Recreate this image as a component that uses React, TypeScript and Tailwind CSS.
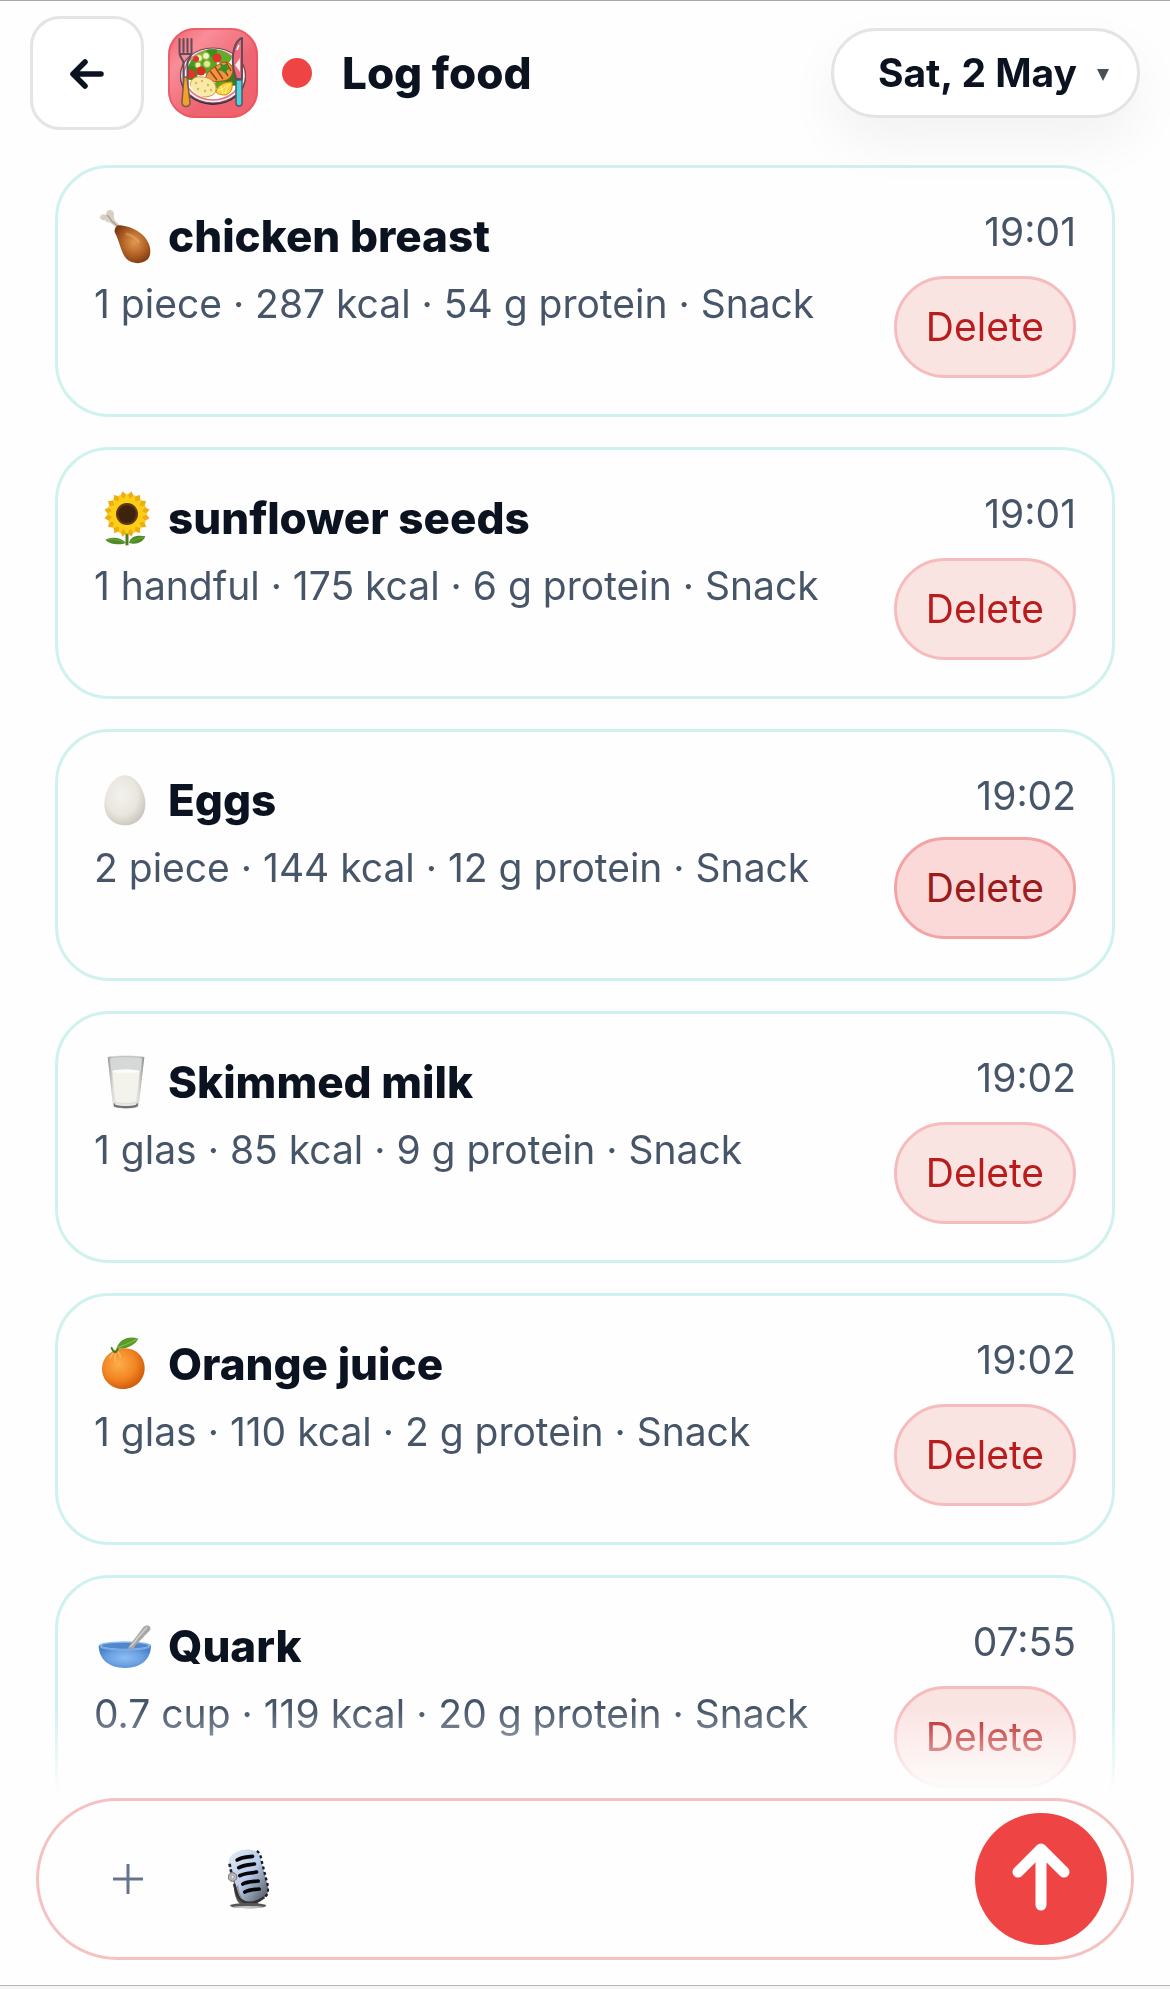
import { useState } from "react";

type Entry = {
  icon: () => React.JSX.Element;
  name: string;
  amount: string;
  kcal: number;
  protein: number;
  meal: string;
  time: string;
  active?: boolean;
}

function MealIcon() {
  return (
    <svg viewBox="0 0 90 90" className="w-[90px] h-[90px] shrink-0" aria-hidden="true">
      <defs>
        <linearGradient id="mealBg" x1="0" y1="0" x2="1" y2="1">
          <stop offset="0" stopColor="#f0616b" />
          <stop offset="0.25" stopColor="#f98d99" />
          <stop offset="0.6" stopColor="#ee6572" />
          <stop offset="1" stopColor="#f0606a" />
        </linearGradient>
        <clipPath id="plateClip"><ellipse cx="45" cy="46" rx="26" ry="25" /></clipPath>
      </defs>
      <rect width="90" height="90" rx="27" fill="url(#mealBg)" />
      <rect x="1" y="1" width="88" height="88" rx="26" fill="none" stroke="#e9505b" strokeWidth="2" opacity="0.7" />
      <ellipse cx="45" cy="49" rx="33" ry="28" fill="#2d2a3c" />
      <ellipse cx="45" cy="47.500" rx="32.500" ry="27.500" fill="#f7e9ec" stroke="#6c4a55" strokeWidth="1.200" />
      <ellipse cx="45" cy="47" rx="29" ry="25" fill="#fff" stroke="#e8737f" strokeWidth="1.500" />
      <g clipPath="url(#plateClip)">
        <circle cx="26" cy="34" r="8" fill="#4a9a22" />
        <circle cx="34" cy="27" r="7" fill="#6fba2c" />
        <circle cx="44" cy="25" r="6" fill="#3f8f1f" />
        <circle cx="56" cy="28" r="8" fill="#5fae28" />
        <circle cx="23" cy="45" r="7" fill="#3e8a1d" />
        <circle cx="40" cy="37" r="9" fill="#58a526" />
        <circle cx="54" cy="56" r="7" fill="#58a526" />
        <circle cx="64" cy="50" r="8" fill="#357f1a" />
        <circle cx="31" cy="30" r="3.500" fill="#e9f3b0" stroke="#8dbb3c" />
        <circle cx="38" cy="28" r="3.500" fill="#f1f6c4" stroke="#8dbb3c" />
        <circle cx="30" cy="37" r="3" fill="#e9f3b0" stroke="#8dbb3c" />
        <circle cx="39" cy="36" r="3.500" fill="#dfeb9a" stroke="#8dbb3c" />
        <circle cx="49" cy="30" r="4.500" fill="#e3342a" />
        <circle cx="33" cy="43" r="4.500" fill="#dc2c22" />
        <circle cx="23" cy="46" r="4.500" fill="#e3342a" />
        <circle cx="28" cy="31" r="3" fill="#e3342a" />
        <path d="M38 48c2-6 9-9 15-13 6-3 12 1 12 8-1 6-5 10-11 10-6 1-16 1-16-5z" fill="#ef9440" stroke="#a94f13" strokeWidth="1" />
        <path d="m42 43 7 9M47 39l8 12M53 36l7 12M58 34l5 9" stroke="#9c4513" strokeWidth="1.500" />
        <path d="m54 43-5-1 4-3-1-3 4 1 3-2v4l4 1-4 2-1 4z" fill="#3c8d24" />
        <path d="M22 58c0-7 6-10 11-9 9 0 15 5 15 12 0 6-6 8-13 8-8 0-13-5-13-11z" fill="#f6e9a9" stroke="#c99d3b" strokeWidth="1" />
        <path d="M48 64c1-6 7-10 16-10 1 6-1 12-7 13-4 0-8-1-9-3z" fill="#ffd23a" stroke="#d2870e" />
        <path d="m50 63 12-7M57 66l3-9M53 58l2 8" stroke="#fff2a0" strokeWidth="1" />
      </g>
      <g fill="#e4b53f">
        <circle cx="28" cy="55" r="1.200" /><circle cx="34" cy="53" r="1.200" /><circle cx="40" cy="57" r="1.200" />
        <circle cx="30" cy="61" r="1.200" /><circle cx="37" cy="63" r="1.200" /><circle cx="43" cy="62" r="1.200" />
      </g>
      <path d="M11.500 11v14c0 5 4 6 4 10v22h4V35c0-4 4-5 4-10V11" fill="none" stroke="#5f4d57" strokeWidth="2" strokeLinecap="round" />
      <path d="M15.500 11v13M19.500 11v13M12 26h11" stroke="#5f4d57" strokeWidth="2" strokeLinecap="round" />
      <path d="M16 49h3l3 25c1 6-9 6-8 0z" fill="#f2a22c" stroke="#7c5b43" strokeWidth="1.500" />
      <path d="M74 10c-7 3-10 14-9 27 0 7 3 10 3 14h6z" fill="#f1697a" stroke="#5f4d57" strokeWidth="2" strokeLinejoin="round" />
      <path d="M67 37l5-7v14z" fill="#fbe9ec" />
      <path d="M69 22l2-5" stroke="#fff" strokeWidth="1.500" />
      <path d="M68 52h6v23c0 4-6 4-6 0z" fill="#4fd3de" stroke="#4f5a68" strokeWidth="1.500" />
    </svg>
  );
}

function ChickenIcon() {
  return (
    <svg viewBox="0 0 180 180" className="w-[60px] h-[60px] shrink-0" aria-hidden="true">
      <defs>
        <radialGradient id="legMeat" cx="0.55" cy="0.45" r="0.6">
          <stop offset="0" stopColor="#e09a50" />
          <stop offset="0.5" stopColor="#b9682a" />
          <stop offset="1" stopColor="#7c3811" />
        </radialGradient>
      </defs>
      <path d="M62 66 43 50c-8 0-15-2-14-7-10 2-20-5-16-12 3-7 11-8 18-5-2-7 3-14 11-14 9 0 14 8 12 18-1 6 0 10 4 14l14 15z" fill="#d8cfc5" />
      <path d="M33 28c5 2 9 8 14 17l18 16" fill="none" stroke="#a99d92" strokeWidth="4" />
      <path d="M68 58c26 0 66 15 84 43 13 20 15 44 4 58-15 17-48 16-64 0C74 140 72 108 56 78c-1-9 3-18 12-20z" fill="url(#legMeat)" />
      <path d="M92 84c16 4 28 12 36 24" fill="none" stroke="#efb678" strokeWidth="7" strokeLinecap="round" opacity="0.4" />
    </svg>
  );
}

function SunflowerIcon() {
  return (
    <svg viewBox="0 0 180 180" className="w-[60px] h-[60px] shrink-0" aria-hidden="true">
      <path d="M93 130v42" stroke="#4e7d1d" strokeWidth="9" />
      <path d="M90 164c-14 8-50 6-62-9 18-10 47-8 62 9zM99 165c5-21 28-24 49-20-6 18-28 27-49 20z" fill="#4f8b26" />
      <path d="M34 155c20-3 36 0 52 9M103 163c14-9 24-12 40-15" fill="none" stroke="#7bb04a" strokeWidth="2" />
      {[11, 34, 56, 79, 101, 124, 146, 169, 191, 214, 236, 259, 281, 304, 326, 349].map((angle) => (
        <path key={angle} d="M93 78 74 34 93 10l19 24z" fill="#f0ae0b" stroke="#d99408" strokeWidth="1" transform={`rotate(${angle} 93 78)`} />
      ))}
      {[0, 22, 45, 68, 90, 112, 135, 158, 180, 202, 225, 248, 270, 292, 315, 338].map((angle) => (
        <path key={angle} d="M93 78 80 40 93 16l13 24z" fill="#fdce18" transform={`rotate(${angle} 93 78)`} />
      ))}
      <circle cx="93" cy="78" r="33" fill="#5d3512" />
      <circle cx="93" cy="78" r="26" fill="#3d230e" />
      <circle cx="93" cy="78" r="30" fill="none" stroke="#6b3f13" strokeWidth="3" strokeDasharray="3 4" />
    </svg>
  );
}

function EggIcon() {
  return (
    <svg viewBox="0 0 180 180" className="w-[60px] h-[60px] shrink-0" aria-hidden="true">
      <defs>
        <radialGradient id="eggShell" cx="0.42" cy="0.4" r="0.65">
          <stop offset="0" stopColor="#f4f2ed" />
          <stop offset="0.6" stopColor="#e9e6df" />
          <stop offset="1" stopColor="#c9c5bc" />
        </radialGradient>
      </defs>
      <path d="M86 16c34 0 62 46 62 86 0 38-26 64-61 64-36 0-62-26-62-64 0-40 28-86 61-86z" fill="url(#eggShell)" />
    </svg>
  );
}

function MilkIcon() {
  return (
    <svg viewBox="0 0 180 180" className="w-[60px] h-[60px] shrink-0" aria-hidden="true">
      <defs>
        <linearGradient id="milkGlass" x1="0" x2="1">
          <stop offset="0" stopColor="#8f8f8f" />
          <stop offset="0.15" stopColor="#e2e2e2" />
          <stop offset="0.85" stopColor="#dcdcdc" />
          <stop offset="1" stopColor="#858585" />
        </linearGradient>
      </defs>
      <path d="M35 16c18-7 92-7 110 0l-17 146c-2 11-75 11-77 0z" fill="url(#milkGlass)" />
      <path d="M42 20c22-5 74-5 96 0l-4 38H46z" fill="#d5d7d8" />
      <path d="M49 58c20-5 62-5 82 0l-10 90c-10 6-54 6-63 0z" fill="#f3f2eb" />
      <ellipse cx="90" cy="58" rx="41" ry="6" fill="#fbfbf7" />
      <path d="M53 154c17 7 56 7 73 0l-1 9c-8 8-63 8-71 0z" fill="#717171" />
      <path d="M58 156c18 5 46 5 62 0" fill="none" stroke="#eee" strokeWidth="4" />
      <path d="M37 18c20-5 86-5 106 0" fill="none" stroke="#b8b8b8" strokeWidth="3" />
    </svg>
  );
}

function OrangeIcon() {
  return (
    <svg viewBox="0 0 180 180" className="w-[60px] h-[60px] shrink-0" aria-hidden="true">
      <defs>
        <radialGradient id="orangePeel" cx="0.4" cy="0.38" r="0.65">
          <stop offset="0" stopColor="#fdad4b" />
          <stop offset="0.6" stopColor="#f28522" />
          <stop offset="1" stopColor="#cf5a0a" />
        </radialGradient>
      </defs>
      <path d="M82 43c37-2 64 24 64 59 0 37-29 63-64 63-36 0-64-26-64-61 0-34 29-59 64-61z" fill="url(#orangePeel)" />
      <path d="M56 54c-8 6-12 12-14 20M60 56c-3 8-4 16-3 24M65 53c6 4 8 10 8 16" fill="none" stroke="#ffd28c" strokeWidth="4" strokeLinecap="round" opacity="0.6" />
      <path d="M47 42c3 8 6 12 11 13 5-2 6-8 8-14" fill="none" stroke="#477b1c" strokeWidth="6" strokeLinecap="round" />
      <path d="M62 43c6-24 33-39 65-29-9 19-37 33-65 29z" fill="#5a9a2b" />
      <path d="M65 40c17-5 36-13 57-24" fill="none" stroke="#91c454" strokeWidth="3" />
    </svg>
  );
}

function BowlIcon() {
  return (
    <svg viewBox="0 0 180 180" className="w-[60px] h-[60px] shrink-0" aria-hidden="true">
      <defs>
        <radialGradient id="bowlBody" cx="0.5" cy="0.55" r="0.55">
          <stop offset="0" stopColor="#8dbdf3" />
          <stop offset="0.6" stopColor="#6ba1e2" />
          <stop offset="1" stopColor="#4a80c6" />
        </radialGradient>
      </defs>
      <path d="M8 88c0 43 32 68 79 68s78-25 78-68z" fill="url(#bowlBody)" />
      <ellipse cx="87" cy="88" rx="78" ry="12" fill="#8fbdf0" />
      <ellipse cx="87" cy="89" rx="70" ry="9" fill="#5187cb" />
      <path d="M94 98c7-10 12-15 17-24l31-40c8-11 27-5 20 9l-39 40c-6 5-7 10-10 15z" fill="#a9a5a2" />
      <path d="M103 91c12-8 16-18 23-27l26-29" fill="none" stroke="#cfccc9" strokeWidth="5" strokeLinecap="round" />
      <path d="M14 94c30 11 115 11 146 0" fill="none" stroke="#78ade9" strokeWidth="5" />
    </svg>
  );
}

function MicIcon() {
  return (
    <svg viewBox="0 0 122 180" className="w-[41px] h-[60px]" aria-hidden="true">
      <defs>
        <linearGradient id="micBody" x1="0" y1="0" x2="1" y2="1">
          <stop offset="0" stopColor="#e6ebf3" />
          <stop offset="0.5" stopColor="#b7cbea" />
          <stop offset="1" stopColor="#494b50" />
        </linearGradient>
      </defs>
      <path d="M16 90c2 36 2 58 20 76h54V140z" fill="#5b5656" />
      <path d="M2 36C6 12 36 0 66 2c22 2 30 12 33 32l20 78c6 28-14 42-42 48-24 4-42-6-45-26L12 78C6 64 0 50 2 36z" fill="url(#micBody)" />
      <path d="M86 6c9 6 12 15 14 28l19 76c4 17-1 28-11 36" fill="none" stroke="#1c1c20" strokeWidth="7" strokeDasharray="9 8" />
      <path d="M18 105c6 24 10 48 36 56 20 2 40-4 54-16" fill="none" stroke="#343436" strokeWidth="8" />
      <path d="M28 110c2 20 5 28 12 36" fill="none" stroke="#99918e" strokeWidth="4" />
      <path d="M4 44 12 84" stroke="#25262b" strokeWidth="8" strokeDasharray="10 7" />
      <path d="M27 33c15-9 28-8 46-11M32 56c15-8 31-8 47-11M35 80c15-8 34-7 50-11M44 105c14-8 30-7 46-9M50 129c13-8 26-7 43-9" fill="none" stroke="#050509" strokeWidth="11" strokeLinecap="round" />
      <circle cx="13" cy="84" r="13" fill="#b9babd" stroke="#6c6c70" strokeWidth="3" />
      <circle cx="13" cy="84" r="5" fill="#e9eaec" stroke="#888" strokeWidth="2" />
      <ellipse cx="60" cy="170" rx="54" ry="8" fill="#5c5755" />
      <ellipse cx="60" cy="174" rx="44" ry="3" fill="#c9c9c9" />
    </svg>
  );
}

const entries: Entry[] = [
  { icon: ChickenIcon, name: "chicken breast", amount: "1 piece", kcal: 287, protein: 54, meal: "Snack", time: "19:01" },
  { icon: SunflowerIcon, name: "sunflower seeds", amount: "1 handful", kcal: 175, protein: 6, meal: "Snack", time: "19:01" },
  { icon: EggIcon, name: "Eggs", amount: "2 piece", kcal: 144, protein: 12, meal: "Snack", time: "19:02", active: true },
  { icon: MilkIcon, name: "Skimmed milk", amount: "1 glas", kcal: 85, protein: 9, meal: "Snack", time: "19:02" },
  { icon: OrangeIcon, name: "Orange juice", amount: "1 glas", kcal: 110, protein: 2, meal: "Snack", time: "19:02" },
  { icon: BowlIcon, name: "Quark", amount: "0.7 cup", kcal: 119, protein: 20, meal: "Snack", time: "07:55" },
];

export default function App() {
  const [items, setItems] = useState(entries);

  return (
    <div className="h-screen flex flex-col bg-[#f5f5f5] font-['Inter',sans-serif] text-[#0b1220]">
      <div className="flex-1 min-h-0 flex flex-col bg-[#fefefe] border-t border-b border-t-[#a8a8a8] border-b-[#b8b8b8] mb-[3px]">
        <header className="relative z-10 flex items-center gap-6 px-[30px] pt-[15px]">
          <button aria-label="Back" className="w-[114px] h-[114px] shrink-0 flex items-center justify-center rounded-[30px] border-3 border-[#e4e4e5] bg-white">
            <svg viewBox="0 0 36 34" className="w-9 h-[34px]" fill="none" stroke="#0b1220" strokeWidth="5.500" strokeLinecap="round" strokeLinejoin="round">
              <path d="M32 18H4M16 6 4 18l12 12" />
            </svg>
          </button>
          <MealIcon />
          <span className="w-[30px] h-[30px] shrink-0 rounded-full bg-[#ef4444]" />
          <h1 className="flex-1 ml-1.5 text-[44px] leading-[56px] font-extrabold">Log food</h1>
          <button className="h-[90px] flex items-center gap-5 pl-11 pr-7 rounded-full border-3 border-[#e4e4e5] bg-white shadow-[0_24px_54px_rgba(15,23,42,0.05)]">
            <span className="text-[39px] leading-[48px] font-bold">Sat, 2 May</span>
            <svg viewBox="0 0 12 12" className="w-3 h-3 mt-1" aria-hidden="true"><path d="M0 0h12L6 12z" fill="#475057" /></svg>
          </button>
        </header>

        <main className="flex-1 min-h-0 overflow-hidden mt-[35px] px-[55px] flex flex-col gap-[30px] [mask-image:linear-gradient(to_bottom,black_calc(100%-90px),transparent_calc(100%-4px))]">
          {items.map((item) => (
            <article key={item.name} className="shrink-0 flex justify-between rounded-[54px] border-3 border-[#cff2ee] p-9">
              <div className="flex flex-col gap-2">
                <div className="flex items-center gap-3 h-16 pl-0.5">
                  <item.icon />
                  <h2 className="text-[44px] leading-[56px] font-extrabold">{item.name}</h2>
                </div>
                <p className="text-[39px] leading-[56px] text-[#475569]">
                  {item.amount} · {item.kcal} kcal · {item.protein} g protein · {item.meal}
                </p>
              </div>
              <div className="flex flex-col items-end gap-4">
                <time className="text-[39px] leading-[56px] text-[#475569]">{item.time}</time>
                <button
                  onClick={() => setItems(items.filter((other) => other !== item))}
                  className={`h-[102px] px-[29px] rounded-full border-3 text-[39px] leading-[48px] ${item.active ? "-translate-y-[3px] border-[#f3a3a3] bg-[#fcd9d9] text-[#991b1b]" : "border-[#f6bcbd] bg-[#fae4e2] text-[#b91c1c]"}`}
                >
                  Delete
                </button>
              </div>
            </article>
          ))}
        </main>

        <footer className="px-9 pb-[25px]">
          <form onSubmit={(e) => e.preventDefault()} className="h-[162px] flex items-center rounded-full border-3 border-[#f5c2c3] pl-[74px] pr-6">
            <button type="button" aria-label="Add">
              <svg viewBox="0 0 30 30" className="w-[30px] h-[30px]" stroke="#64748b" strokeWidth="3"><path d="M15 0v30M0 15h30" /></svg>
            </button>
            <button type="button" aria-label="Record" className="ml-[85px]"><MicIcon /></button>
            <input aria-label="Food" className="flex-1 min-w-0 mx-8 text-[39px] bg-transparent outline-none" />
            <button aria-label="Send" className="w-[132px] h-[132px] shrink-0 flex items-center justify-center rounded-full bg-[#ef4444]">
              <svg viewBox="0 0 58 68" className="w-[58px] h-[68px] -mt-1" fill="none" stroke="#fff" strokeWidth="11" strokeLinecap="round" strokeLinejoin="round">
                <path d="M29 62V6M6 29 29 6l23 23" />
              </svg>
            </button>
          </form>
        </footer>
      </div>
    </div>
  );
}
